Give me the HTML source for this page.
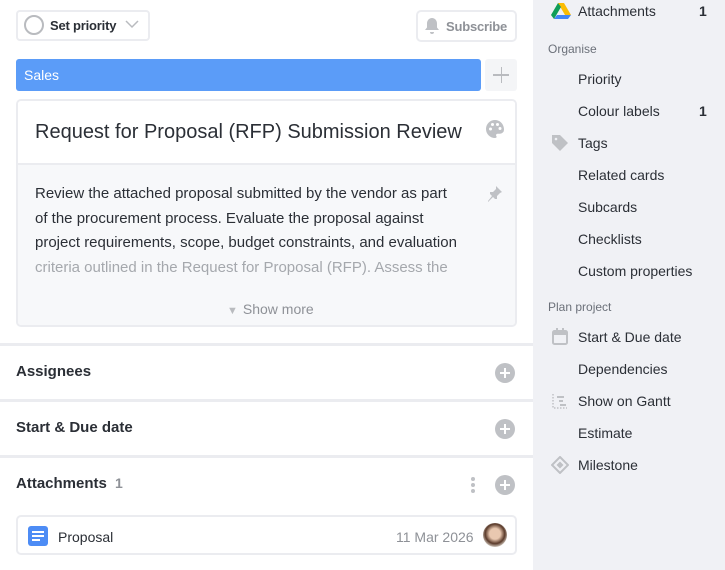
<!DOCTYPE html>
<html><head><meta charset="utf-8"><style>
*{box-sizing:border-box;margin:0;padding:0}
body{width:725px;height:570px;overflow:hidden;font-family:"Liberation Sans",sans-serif;background:#fff;position:relative;color:#2b2f36}
.a{position:absolute}
.side{left:533px;top:0;width:192px;height:570px;background:#f0f1f5}
.si{position:absolute;left:45px;font-size:14px;color:#2b2f36;white-space:nowrap}
.sh{position:absolute;left:15px;font-size:12px;color:#6b7079}
.cnt{position:absolute;left:166px;font-size:14px;font-weight:bold;color:#2b2f36}
.sec{position:absolute;left:0;width:533px;height:3px;background:#ebecf0}
.st{position:absolute;left:16px;font-size:15px;font-weight:bold;color:#2b2f36}
.plus{position:absolute;left:495px;width:20px;height:20px;border-radius:50%;background:#bfc1c5}
.plus:before{content:"";position:absolute;left:5px;top:9px;width:10px;height:2px;background:#fff}
.plus:after{content:"";position:absolute;left:9px;top:5px;width:2px;height:10px;background:#fff}
</style></head><body>
<div class="a" style="left:16px;top:10px;width:134px;height:31px;border:2px solid #ebecf0;border-radius:4px"></div>
<div class="a" style="left:24px;top:15px;width:20px;height:20px;border:2px solid #b9bbbf;border-radius:50%"></div>
<div class="a" style="left:50px;top:18px;font-size:13px;font-weight:bold;letter-spacing:-0.2px">Set priority</div>
<svg class="a" style="left:125px;top:20px" width="14" height="9"><path d="M1 1l6 6 6-6" fill="none" stroke="#b9bbbf" stroke-width="1.5"/></svg>
<div class="a" style="left:416px;top:10px;width:101px;height:32px;border:2px solid #ebecf0;border-radius:5px"></div>
<svg class="a" style="left:424px;top:17px" width="16" height="18"><path d="M8 1c-3 0-5 2.5-5 5.5v4L1 13h14l-2-2.5v-4C13 3.5 11 1 8 1z M6 15a2 2 0 0 0 4 0z" fill="#bfc1c5"/></svg>
<div class="a" style="left:446px;top:19px;font-size:13px;font-weight:bold;color:#8e9197;letter-spacing:-0.2px">Subscribe</div>
<div class="a" style="left:16px;top:59px;width:465px;height:32px;background:#5b9cf8;border-radius:3px;color:#fff;font-size:14px;padding:8px 0 0 8px">Sales</div>
<div class="a" style="left:485px;top:59px;width:32px;height:32px;background:#f4f5f7;border-radius:3px"></div>
<div class="a" style="left:493px;top:74px;width:16px;height:1.5px;background:#b9bbbf"></div>
<div class="a" style="left:500.5px;top:67px;width:1.5px;height:16px;background:#b9bbbf"></div>
<div class="a" style="left:16px;top:99px;width:501px;height:228px;border:2px solid #ebecf0;border-radius:5px;overflow:hidden">
 <div style="height:64px;background:#fff;border-bottom:2px solid #ebecf0;padding:20px 0 0 17px;font-size:20px;color:#2b2f36">Request for Proposal (RFP) Submission Review</div>
 <div style="background:#f7f8fa;height:162px;padding:17px 0 0 17px;font-size:15px;line-height:24.5px;color:#2b2f36;position:relative">
  <div>Review the attached proposal submitted by the vendor as part<br>of the procurement process. Evaluate the proposal against<br>project requirements, scope, budget constraints, and evaluation<br><span style="color:#a5a8ad">criteria outlined in the Request for Proposal (RFP). Assess the</span></div>
  <div style="position:absolute;left:209px;top:132px;font-size:14px;color:#8e9197"><span style="font-size:11px;color:#b9bbbf;margin-right:5px">▼</span>Show more</div>
 </div>
</div>
<svg class="a" style="left:485px;top:119px" width="20" height="20"><path d="M10 1a9 9 0 0 0 0 18c1.5 0 2-1 1.3-2-.7-1 0-2.3 1.3-2.3H15a4 4 0 0 0 4-4C19 5 15 1 10 1z" fill="#bfc1c5"/><circle cx="5.5" cy="10" r="1.5" fill="#fff"/><circle cx="7.5" cy="5.5" r="1.5" fill="#fff"/><circle cx="12.5" cy="5.5" r="1.5" fill="#fff"/><circle cx="15" cy="9.5" r="1.5" fill="#fff"/></svg>
<svg class="a" style="left:486px;top:184px" width="18" height="18"><path d="M10 2l6 6-2 1-3 3 0 3-2 0-2-2-5 5-0-1 4-5-2-2 0-2 3 0 3-3z" fill="#bfc1c5"/></svg>
<div class="sec" style="top:343px"></div>
<div class="st" style="top:363px">Assignees</div><div class="plus" style="top:363px"></div>
<div class="sec" style="top:399px"></div>
<div class="st" style="top:419px">Start &amp; Due date</div><div class="plus" style="top:419px"></div>
<div class="sec" style="top:455px"></div>
<div class="st" style="top:475px">Attachments <span style="color:#8e9197;margin-left:4px;font-size:14px">1</span></div><div class="plus" style="top:475px"></div>
<div class="a" style="left:471px;top:477px;width:4px;height:4px;border-radius:50%;background:#bfc1c5;box-shadow:0 6px 0 #bfc1c5,0 12px 0 #bfc1c5"></div>
<div class="a" style="left:16px;top:515px;width:501px;height:40px;border:2px solid #ebecf0;border-radius:5px"></div>
<div class="a" style="left:28px;top:526px;width:20px;height:20px;background:#4d8cf5;border-radius:3px"></div>
<div class="a" style="left:32px;top:531px;width:12px;height:2px;background:#fff;box-shadow:0 4px 0 #fff"></div>
<div class="a" style="left:32px;top:539px;width:8px;height:2px;background:#fff"></div>
<div class="a" style="left:58px;top:529px;font-size:14px">Proposal</div>
<div class="a" style="left:396px;top:529px;font-size:14px;color:#8e9197">11 Mar 2026</div>
<div class="a" style="left:483px;top:523px;width:24px;height:24px;border-radius:50%;background:radial-gradient(circle at 50% 45%,#e9c8b0 30%,#5a3a2a 55%,#d8cfc5 75%)"></div>
<div class="a side">
 <svg style="position:absolute;left:18px;top:3px" width="20" height="16"><path d="M7 0h6l7 12h-6z" fill="#fbbc04"/><path d="M7 0L0 12l3 4 7-12z" fill="#0f9d58"/><path d="M3 16h14l3-4H6z" fill="#4285f4"/></svg>
 <div class="si" style="top:3px">Attachments</div><div class="cnt" style="top:3px">1</div>
 <div class="sh" style="top:42px">Organise</div>
 <div class="si" style="top:71px">Priority</div>
 <div class="si" style="top:103px">Colour labels</div><div class="cnt" style="top:103px">1</div>
 <svg style="position:absolute;left:18px;top:134px" width="18" height="18"><path d="M1 1h8l8 8-8 8-8-8z" fill="#bfc1c5"/><circle cx="5" cy="5" r="1.3" fill="#f0f1f5"/></svg>
 <div class="si" style="top:135px">Tags</div>
 <div class="si" style="top:167px">Related cards</div>
 <div class="si" style="top:199px">Subcards</div>
 <div class="si" style="top:231px">Checklists</div>
 <div class="si" style="top:263px">Custom properties</div>
 <div class="sh" style="top:300px">Plan project</div>
 <svg style="position:absolute;left:19px;top:328px" width="16" height="17"><rect x="1" y="3" width="14" height="13" rx="1.5" fill="none" stroke="#bfc1c5" stroke-width="2"/><rect x="1" y="3" width="14" height="4" fill="#bfc1c5"/><rect x="4" y="0" width="2" height="4" fill="#bfc1c5"/><rect x="10" y="0" width="2" height="4" fill="#bfc1c5"/></svg>
 <div class="si" style="top:329px">Start &amp; Due date</div>
 <div class="si" style="top:361px">Dependencies</div>
 <svg style="position:absolute;left:19px;top:393px" width="16" height="16"><path d="M1 1v14h14" fill="none" stroke="#bfc1c5" stroke-width="1.5" stroke-dasharray="1.5 1.5"/><rect x="5" y="3" width="7" height="2" fill="#bfc1c5"/><rect x="7" y="7" width="4" height="2" fill="#bfc1c5"/><rect x="8" y="11" width="6" height="2" fill="#bfc1c5"/></svg>
 <div class="si" style="top:393px">Show on Gantt</div>
 <div class="si" style="top:425px">Estimate</div>
 <svg style="position:absolute;left:18px;top:456px" width="18" height="18"><path d="M9 1l8 8-8 8-8-8z" fill="none" stroke="#bfc1c5" stroke-width="2"/><path d="M9 5.5l3.5 3.5L9 12.5 5.5 9z" fill="#bfc1c5"/></svg>
 <div class="si" style="top:457px">Milestone</div>
</div>
</body></html>
